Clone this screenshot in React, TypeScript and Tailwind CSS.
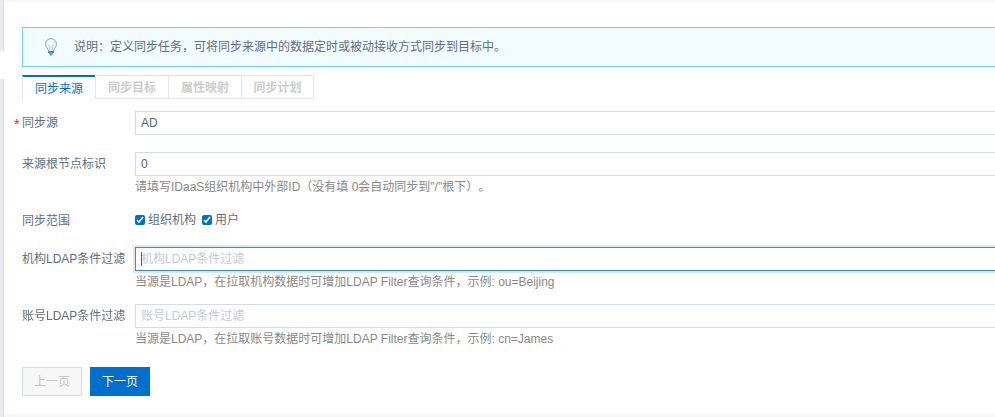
import { ReactNode, useState } from "react";

const tabs = ["同步来源", "同步目标", "属性映射", "同步计划"];

const inputClass =
  "block h-6 w-full border border-r-0 border-[#d5dbe5] bg-white pl-[5px] text-[12px] text-[#555f6e] outline-none placeholder:text-[#c3cad5] focus:border-[#3a8cd9] focus:caret-transparent focus:shadow-[0_0_0_2px_#d9e9f7]";

function BulbIcon() {
  return (
    <svg width="14" height="18" viewBox="0 0 14 18" fill="none" aria-hidden="true">
      <path
        d="M4.500 13C4.500 10.500 1.500 9.500 1.500 6.200A5.500 5.500 0 0 1 12.500 6.200C12.500 9.500 9.500 10.500 9.500 13"
        stroke="#7ba4dc"
      />
      <path d="M5.800 12.500V8.500L4.500 7M8.200 12.500V8.500L9.500 7" stroke="#a3c2ec" />
      <path d="M4 13h6v2H4z" fill="#4a86d8" />
      <path d="M5 15h4v1.400H8.200v1.300H5.800v-1.300H5z" fill="#7ba4dc" />
    </svg>
  );
}

type RowProps = {
  label: string;
  htmlFor?: string;
  required?: boolean;
  hint?: string;
  children: ReactNode;
};

function Row({ label, htmlFor, required, hint, children }: RowProps) {
  return (
    <div className="mb-[10px] flex">
      <div className="relative w-[113px] shrink-0 leading-6">
        {required && (
          <span className="absolute top-px -left-2 text-[14px] text-[#f5222d]">*</span>
        )}
        <label htmlFor={htmlFor}>{label}</label>
      </div>
      <div className="min-w-0 flex-1">
        {children}
        {hint && <p className="leading-[23px] text-[#888888]">{hint}</p>}
      </div>
    </div>
  );
}

export default function App() {
  const [source, setSource] = useState("AD");
  const [rootId, setRootId] = useState("0");
  const [orgFilter, setOrgFilter] = useState("");
  const [accountFilter, setAccountFilter] = useState("");

  return (
    <div className="flex min-h-screen bg-white font-['Liberation_Sans','Noto_Sans_CJK_SC',sans-serif] text-[12px] text-[#636d7e] [text-spacing-trim:space-all]">
      <aside className="flex w-1 shrink-0 flex-col">
        <div className="h-[51px] border-r border-[#d8dce5] bg-[#e9ecf3]" />
        <div className="h-7 bg-white" />
        <div className="flex-1 border-r border-[#d8dce5] bg-[#e9ecf3]" />
      </aside>
      <main className="flex min-w-0 flex-1 flex-col border-t-2 border-b-3 border-[#f7f7f7] pt-[25px] pl-[18px]">
        <div className="flex h-10 items-center border border-r-0 border-[#6dd9dc] bg-[#f2fbfe] pl-[21px]">
          <BulbIcon />
          <p className="ml-4">
            说明：定义同步任务，可将同步来源中的数据定时或被动接收方式同步到目标中。
          </p>
        </div>
        <div role="tablist" className="mt-2 flex h-6">
          {tabs.map((tab, i) => (
            <button
              key={tab}
              type="button"
              role="tab"
              aria-selected={i === 0}
              disabled={i !== 0}
              className={
                i === 0
                  ? "w-[73px] border-t-2 border-l border-t-[#0070cc] border-l-[#e3e4e6] pt-px text-[#0070cc]"
                  : "w-[73px] border border-r-0 border-[#e3e4e6] pt-[2px] font-bold text-[#cccccc] last:border-r"
              }
            >
              {tab}
            </button>
          ))}
        </div>
        <form className="pt-3" onSubmit={(e) => e.preventDefault()}>
          <Row label="同步源" htmlFor="source" required>
            <div className="pb-[7px]">
              <input
                id="source"
                className={inputClass}
                value={source}
                onChange={(e) => setSource(e.target.value)}
              />
            </div>
          </Row>
          <Row
            label="来源根节点标识"
            htmlFor="rootId"
            hint={'请填写IDaaS组织机构中外部ID（没有填 0会自动同步到"/"根下）。'}
          >
            <input
              id="rootId"
              className={inputClass}
              value={rootId}
              onChange={(e) => setRootId(e.target.value)}
            />
          </Row>
          <Row label="同步范围">
            <div className="flex h-7 gap-[6px] pb-[6px]">
              <label className="flex items-center gap-[3px]">
                <input type="checkbox" defaultChecked className="size-[10px] accent-[#0070cc]" />
                组织机构
              </label>
              <label className="flex items-center gap-[3px]">
                <input type="checkbox" defaultChecked className="size-[10px] accent-[#0070cc]" />
                用户
              </label>
            </div>
          </Row>
          <Row
            label="机构LDAP条件过滤"
            htmlFor="orgFilter"
            hint="当源是LDAP，在拉取机构数据时可增加LDAP Filter查询条件，示例: ou=Beijing"
          >
            <div className="relative">
              <input
                id="orgFilter"
                autoFocus
                className={inputClass}
                placeholder="机构LDAP条件过滤"
                value={orgFilter}
                onChange={(e) => setOrgFilter(e.target.value)}
              />
              {orgFilter === "" && (
                <span className="pointer-events-none absolute top-[5px] left-[6px] h-[14px] w-px bg-[#555f6e]" />
              )}
            </div>
          </Row>
          <Row
            label="账号LDAP条件过滤"
            htmlFor="accountFilter"
            hint="当源是LDAP，在拉取账号数据时可增加LDAP Filter查询条件，示例: cn=James"
          >
            <input
              id="accountFilter"
              className={inputClass}
              placeholder="账号LDAP条件过滤"
              value={accountFilter}
              onChange={(e) => setAccountFilter(e.target.value)}
            />
          </Row>
          <div className="flex gap-2 pt-[6px]">
            <button
              type="button"
              disabled
              className="h-[29px] w-[60px] border border-[#d5dbe5] bg-[#f7f7f7] text-[#c1c7d0]"
            >
              上一页
            </button>
            <button type="submit" className="h-[29px] w-[60px] bg-[#0070cc] text-white">
              下一页
            </button>
          </div>
        </form>
      </main>
    </div>
  );
}
